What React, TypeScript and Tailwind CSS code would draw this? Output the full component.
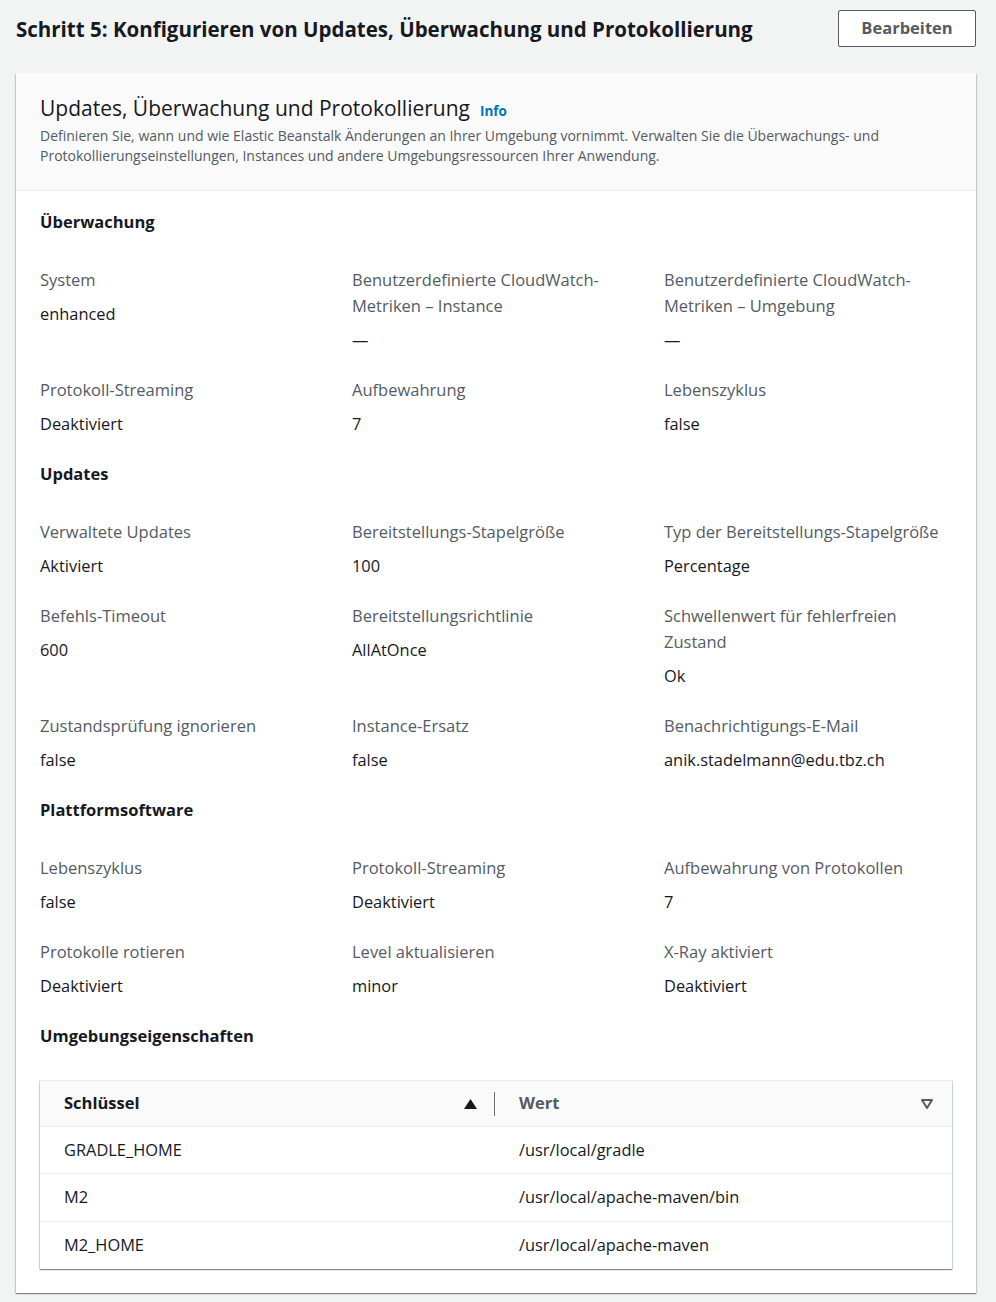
import React from "react";

type F = { l: string; v: string };

const Field = ({ l, v }: F) => (
  <div className="pr-6">
    <div className="text-[16.5px] leading-[26px] text-[#545b64]">{l}</div>
    <div className="mt-[8px] text-[16.4px] leading-[26px] text-[#16191f]">{v}</div>
  </div>
);

const Section = ({ title, rows }: { title: string; rows: F[][] }) => (
  <div>
    <h3 className="text-[16.5px] leading-[24px] font-bold text-[#16191f]">{title}</h3>
    <div className="mt-[33px] flex flex-col gap-y-6">
      {rows.map((r, i) => (
        <div key={i} className="grid grid-cols-3">
          {r.map((f, j) => (
            <Field key={j} {...f} />
          ))}
        </div>
      ))}
    </div>
  </div>
);

const rowsData: { k: string; v: string; h: string }[] = [
  { k: "GRADLE_HOME", v: "/usr/local/gradle", h: "h-[47px] border-b border-[#eaeded]" },
  { k: "M2", v: "/usr/local/apache-maven/bin", h: "h-[48px] border-b border-[#eaeded]" },
  { k: "M2_HOME", v: "/usr/local/apache-maven", h: "h-[47px]" },
];

export default function App() {
  const font = { fontFamily: '"Open Sans", "Noto Sans", sans-serif' };
  return (
    <div className="min-h-[1302px] bg-[#f2f3f3] pl-4 pr-5 pt-[10px] pb-2" style={font}>
      <div className="flex items-center justify-between">
        <h2 className="text-[20.5px] leading-[36px] font-bold text-[#16191f]">
          Schritt 5: Konfigurieren von Updates, Überwachung und Protokollierung
        </h2>
        <button className="h-[37px] w-[138px] rounded-[2px] border border-[#545b64] bg-white text-[16.5px] font-bold text-[#545b64]">
          Bearbeiten
        </button>
      </div>

      <div className="mt-[26px] bg-white shadow-[0_1px_1px_0_rgba(0,28,36,0.3),1px_1px_1px_0_rgba(0,28,36,0.15),-1px_1px_1px_0_rgba(0,28,36,0.15)]">
        <div className="border-b border-[#eaeded] bg-[#fafafa] px-6 pt-[21px] pb-[24px]">
          <div className="flex items-baseline gap-[10px]">
            <span className="text-[21px] leading-[28px] text-[#16191f]">
              Updates, Überwachung und Protokollierung
            </span>
            <span className="text-[13.5px] font-bold text-[#0073bb]">Info</span>
          </div>
          <p className="mt-1 text-[14px] leading-[20px] text-[#545b64]">
            Definieren Sie, wann und wie Elastic Beanstalk Änderungen an Ihrer Umgebung vornimmt. Verwalten Sie die Überwachungs- und
            <br />
            Protokollierungseinstellungen, Instances und andere Umgebungsressourcen Ihrer Anwendung.
          </p>
        </div>

        <div className="flex flex-col gap-[25px] pl-6 pt-[19px] pb-[24px]">
          <Section
            title="Überwachung"
            rows={[
              [
                { l: "System", v: "enhanced" },
                { l: "Benutzerdefinierte CloudWatch-Metriken – Instance", v: "—" },
                { l: "Benutzerdefinierte CloudWatch-Metriken – Umgebung", v: "—" },
              ],
              [
                { l: "Protokoll-Streaming", v: "Deaktiviert" },
                { l: "Aufbewahrung", v: "7" },
                { l: "Lebenszyklus", v: "false" },
              ],
            ]}
          />
          <Section
            title="Updates"
            rows={[
              [
                { l: "Verwaltete Updates", v: "Aktiviert" },
                { l: "Bereitstellungs-Stapelgröße", v: "100" },
                { l: "Typ der Bereitstellungs-Stapelgröße", v: "Percentage" },
              ],
              [
                { l: "Befehls-Timeout", v: "600" },
                { l: "Bereitstellungsrichtlinie", v: "AllAtOnce" },
                { l: "Schwellenwert für fehlerfreien Zustand", v: "Ok" },
              ],
              [
                { l: "Zustandsprüfung ignorieren", v: "false" },
                { l: "Instance-Ersatz", v: "false" },
                { l: "Benachrichtigungs-E-Mail", v: "anik.stadelmann@edu.tbz.ch" },
              ],
            ]}
          />
          <Section
            title="Plattformsoftware"
            rows={[
              [
                { l: "Lebenszyklus", v: "false" },
                { l: "Protokoll-Streaming", v: "Deaktiviert" },
                { l: "Aufbewahrung von Protokollen", v: "7" },
              ],
              [
                { l: "Protokolle rotieren", v: "Deaktiviert" },
                { l: "Level aktualisieren", v: "minor" },
                { l: "X-Ray aktiviert", v: "Deaktiviert" },
              ],
            ]}
          />
          <div className="pr-6">
            <h3 className="text-[16.5px] leading-[24px] font-bold text-[#16191f]">Umgebungseigenschaften</h3>
            <div className="mt-[32px] border-t border-[#eaeded] bg-white shadow-[0_1px_1px_0_rgba(0,28,36,0.3),1px_1px_1px_0_rgba(0,28,36,0.15),-1px_1px_1px_0_rgba(0,28,36,0.15)]">
              <div className="grid h-[46px] grid-cols-[455px_1fr] border-b border-[#eaeded] bg-[#fafafa]">
                <div className="flex items-center justify-between pl-6">
                  <span className="text-[16.5px] font-bold text-[#16191f]">Schlüssel</span>
                  <div className="flex items-center">
                    <svg width="13" height="10" viewBox="0 0 13 10" className="mr-[17px]">
                      <polygon points="6.5,0 13,10 0,10" fill="#16191f" />
                    </svg>
                    <div className="h-[24px] w-px bg-[#687078]" />
                  </div>
                </div>
                <div className="flex items-center justify-between pl-6 pr-[19px]">
                  <span className="text-[16.5px] font-bold text-[#545b64]">Wert</span>
                  <svg width="12" height="10" viewBox="0 0 12 10">
                    <polygon points="1,1 11,1 6,9" fill="none" stroke="#545b64" strokeWidth="2" strokeLinejoin="round" />
                  </svg>
                </div>
              </div>
              {rowsData.map((r) => (
                <div
                  key={r.k}
                  className={`grid grid-cols-[455px_1fr] items-center text-[16.4px] text-[#16191f] ${r.h}`}
                >
                  <div className="pl-6">{r.k}</div>
                  <div className="pl-6">{r.v}</div>
                </div>
              ))}
            </div>
          </div>
        </div>
      </div>
    </div>
  );
}
